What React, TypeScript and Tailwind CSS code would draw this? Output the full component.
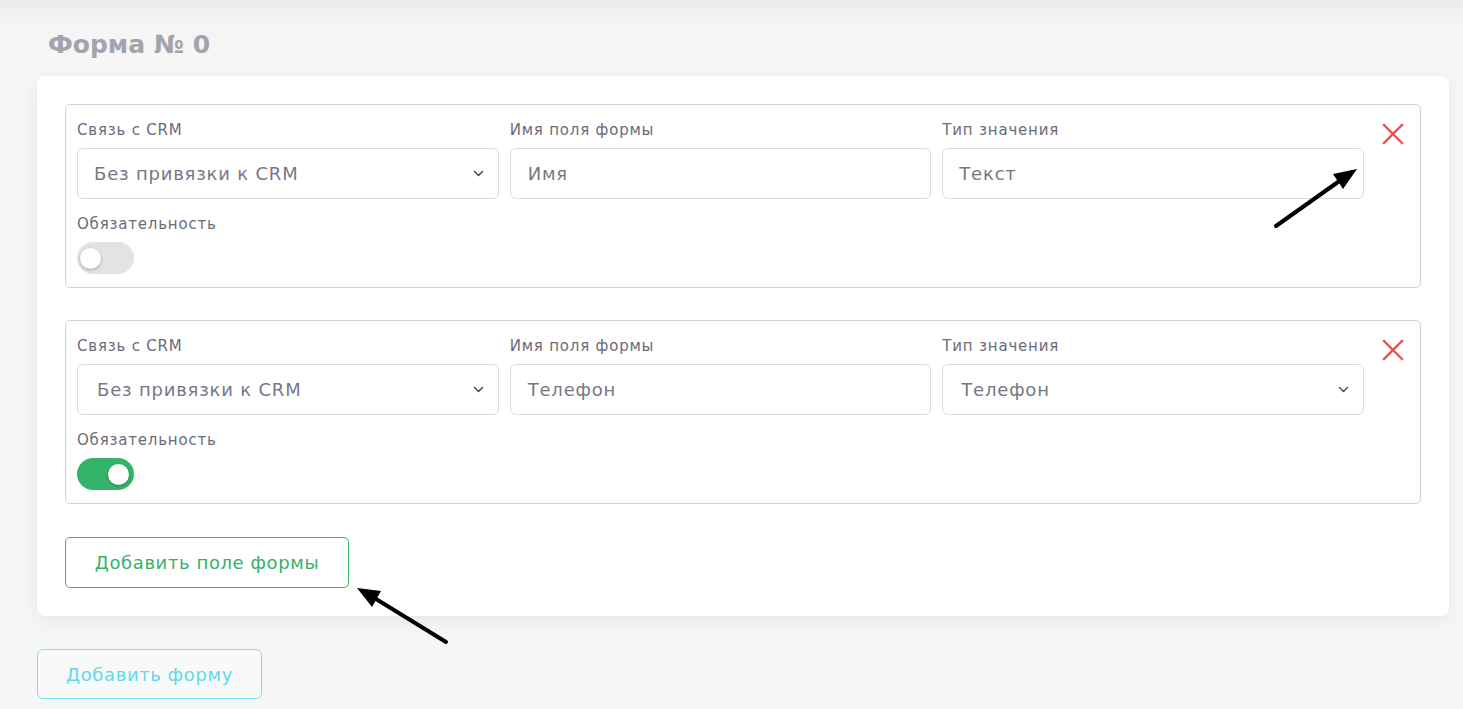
import React from "react";

const font = { fontFamily: '"DejaVu Sans", "Noto Sans", sans-serif' };

function Chevron() {
  return (
    <svg width="11" height="7" viewBox="0 0 11 7" fill="none">
      <path d="M1.5 1.5L5.5 5.5L9.5 1.5" stroke="#4b4b57" strokeWidth="1.5" strokeLinecap="round" strokeLinejoin="round" />
    </svg>
  );
}

function Field({ label, value, select, pl }: { label: string; value: string; select?: boolean; pl: string }) {
  return (
    <div className="flex flex-col">
      <div className="h-[20px] text-[15px] leading-[20px] tracking-[0.8px] text-[#6c6b78]">{label}</div>
      <div className={`mt-[8px] flex h-[51px] items-center rounded-[6px] border border-[#dcdbe2] bg-white ${pl} pr-[14px]`}>
        <span className="flex-1 text-[18px] tracking-[0.8px] text-[#787787]">{value}</span>
        {select && <Chevron />}
      </div>
    </div>
  );
}

function Toggle({ on }: { on: boolean }) {
  return (
    <div className={`relative mt-[8px] h-[32px] w-[57px] rounded-full ${on ? "bg-[#33b46a]" : "bg-[#e3e3e3]"}`}>
      <div
        className={`absolute top-[5.5px] h-[21px] w-[21px] rounded-full bg-white shadow-[0_1px_3px_rgba(0,0,0,0.3)] ${on ? "left-[31px]" : "left-[3px]"}`}
      />
    </div>
  );
}

function XIcon() {
  return (
    <svg width="22" height="22" viewBox="0 0 22 22" fill="none">
      <path d="M2 2L20 20M20 2L2 20" stroke="#ef4f4f" strokeWidth="2.4" strokeLinecap="square" />
    </svg>
  );
}

function Block({ f1, f2, f3, f3select, on, pl1, pl3 }: { f1: string; f2: string; f3: string; f3select: boolean; on: boolean; pl1: string; pl3: string }) {
  return (
    <div className="flex rounded-[5px] border border-[#cfcfd4] pb-[13px] pl-[11px] pt-[15px]">
      <div className="flex flex-1 flex-col">
        <div className="grid grid-cols-3 gap-x-[11px]">
          <Field label="Связь с CRM" value={f1} select pl={pl1} />
          <Field label="Имя поля формы" value={f2} pl="pl-[17px]" />
          <Field label="Тип значения" value={f3} select={f3select} pl={pl3} />
        </div>
        <div className="mt-[15px] h-[20px] text-[15px] leading-[20px] tracking-[0.8px] text-[#6c6b78]">Обязательность</div>
        <Toggle on={on} />
      </div>
      <div className="ml-[18px] mr-[16px] mt-[3px]">
        <XIcon />
      </div>
    </div>
  );
}

export default function App() {
  return (
    <div
      className="relative min-h-screen bg-[linear-gradient(to_bottom,#ebebeb_0px,#f4f4f4_24px,#f6f6f6_60px)] pl-[37px] pr-[14px] pt-[30px] pb-[10px]"
      style={font}
    >
      <div className="pl-[11px] text-[25px] font-bold leading-[30px] text-[#a4a3ac]">Форма № 0</div>
      <div className="mt-[16px] rounded-[8px] bg-white px-[28px] pb-[28px] pt-[28px] shadow-[0_4px_18px_rgba(0,0,0,0.07)]">
        <div className="flex flex-col gap-[32px]">
          <Block f1="Без привязки к CRM" f2="Имя" f3="Текст" f3select={false} on={false} pl1="pl-[16px]" pl3="pl-[16px]" />
          <Block f1="Без привязки к CRM" f2="Телефон" f3="Телефон" f3select on pl1="pl-[19px]" pl3="pl-[18px]" />
        </div>
        <button className="mt-[33px] flex h-[51px] w-[284px] items-center justify-center rounded-[5px] border border-[#3db56d] bg-white text-[18px] font-medium tracking-[0.6px] text-[#36b169]">
          Добавить поле формы
        </button>
      </div>
      <button className="mt-[33px] flex h-[50px] w-[225px] items-center justify-center rounded-[6px] border border-[#74e1ee] bg-[#f8f9f9] text-[18px] font-medium tracking-[0.6px] text-[#62d8ec]">
        Добавить форму
      </button>

      <svg className="pointer-events-none absolute left-0 top-0" width="1463" height="709">
        <line x1="1276" y1="226" x2="1338" y2="182" stroke="#000" strokeWidth="4" strokeLinecap="round" />
        <polygon points="1357,169 1333,174 1343,189" fill="#000" />
        <line x1="446" y1="642" x2="376" y2="599" stroke="#000" strokeWidth="4" strokeLinecap="round" />
        <polygon points="357,588 372,607 381,591" fill="#000" />
      </svg>
    </div>
  );
}
